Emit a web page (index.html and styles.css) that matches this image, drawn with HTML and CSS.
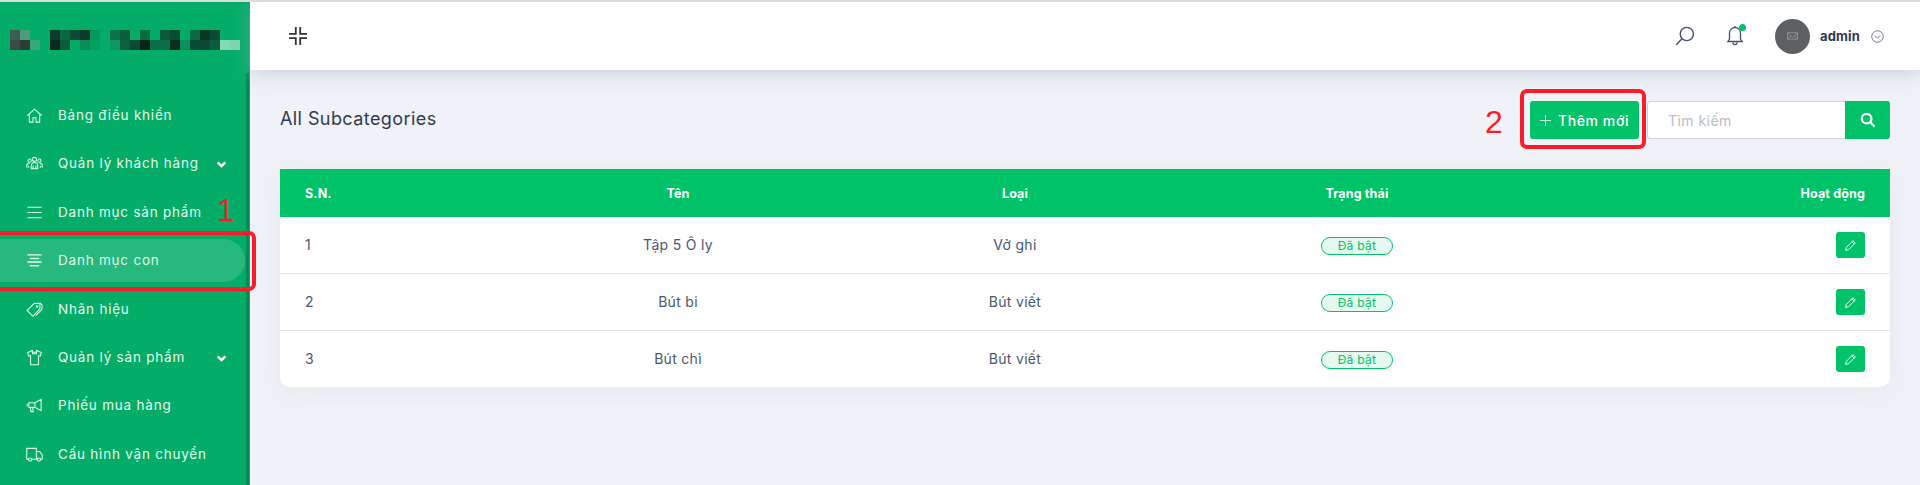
FILE: index.html
```html
<!DOCTYPE html>
<html lang="vi">
<head>
<meta charset="utf-8">
<title>All Subcategories</title>
<link rel="stylesheet" href="styles.css">
</head>
<body>
<div class="app">
  <aside class="sidebar">
    <div class="logo">
      <svg width="240" height="20" viewBox="0 0 240 20" shape-rendering="crispEdges">
        <rect x="10" y="0" width="10" height="10" fill="#3d5d52"/><rect x="20" y="0" width="10" height="10" fill="#4f9a7d"/>
        <rect x="50" y="0" width="10" height="10" fill="#0e3a2a"/><rect x="60" y="0" width="10" height="10" fill="#0c6840"/><rect x="70" y="0" width="10" height="10" fill="#0c4c34"/><rect x="80" y="0" width="10" height="10" fill="#0c3a2a"/><rect x="90" y="0" width="10" height="10" fill="#05995c"/>
        <rect x="110" y="0" width="10" height="10" fill="#0b7248"/><rect x="120" y="0" width="10" height="10" fill="#0a5c3c"/><rect x="140" y="0" width="10" height="10" fill="#0a6a42"/><rect x="160" y="0" width="10" height="10" fill="#0b5a3a"/><rect x="170" y="0" width="10" height="10" fill="#0c4a34"/><rect x="190" y="0" width="10" height="10" fill="#0a6a42"/><rect x="200" y="0" width="10" height="10" fill="#083524"/><rect x="210" y="0" width="10" height="10" fill="#0b4a34"/>
        <rect x="10" y="10" width="10" height="10" fill="#3a4a44"/><rect x="20" y="10" width="10" height="10" fill="#2c3c37"/><rect x="30" y="10" width="10" height="10" fill="#3aa87c"/>
        <rect x="50" y="10" width="10" height="10" fill="#0a2a1e"/><rect x="60" y="10" width="10" height="10" fill="#0f5a3c"/><rect x="80" y="10" width="10" height="10" fill="#0b8c58"/><rect x="90" y="10" width="10" height="10" fill="#06a060"/>
        <rect x="110" y="10" width="10" height="10" fill="#0d9660"/><rect x="120" y="10" width="10" height="10" fill="#0e6040"/><rect x="130" y="10" width="10" height="10" fill="#0b4a34"/><rect x="140" y="10" width="10" height="10" fill="#07231a"/><rect x="150" y="10" width="10" height="10" fill="#0b6e48"/><rect x="160" y="10" width="10" height="10" fill="#0c6e48"/><rect x="170" y="10" width="10" height="10" fill="#0a2e22"/><rect x="180" y="10" width="10" height="10" fill="#0e8e5c"/><rect x="190" y="10" width="10" height="10" fill="#0e4a36"/><rect x="200" y="10" width="10" height="10" fill="#0c4a36"/><rect x="210" y="10" width="10" height="10" fill="#0c5c3e"/><rect x="220" y="10" width="10" height="10" fill="#86d9b4"/><rect x="230" y="10" width="10" height="10" fill="#7ed6ae"/>
      </svg>
    </div>
    <nav class="menu">
      <a class="item"><svg class="ico" viewBox="0 0 18 18"><path d="M1.500 9 9 2.200l7.500 6.800M3.500 7.400V16h3.900v-4.600h3.200V16h3.900V7.400"/></svg><span>Bảng điều khiển</span></a>
      <a class="item"><svg class="ico" viewBox="0 0 18 18"><circle cx="9" cy="4.500" r="2.200"/><circle cx="3.800" cy="6" r="1.700"/><circle cx="14.200" cy="6" r="1.700"/><path d="M5.600 14.500v-3.300C5.600 9.300 7 8 9 8s3.400 1.300 3.400 3.200v3.300zM.8 13.500v-2.500c0-1.300 1-2.200 2.900-2.200M17.200 13.500v-2.500c0-1.300-1-2.200-2.900-2.200M7.500 14.500v-3.500M10.500 14.500v-3.500M2.800 13.500v-2M15.200 13.500v-2"/></svg><span>Quản lý khách hàng</span><svg class="chev" viewBox="0 0 10 8"><path d="M1.500 2 5 5.500 8.500 2"/></svg></a>
      <a class="item"><svg class="ico" viewBox="0 0 18 18"><path d="M1.500 3.500h15M1.500 9h15M1.500 14.500h15"/></svg><span>Danh mục sản phẩm</span></a>
      <a class="item active"><svg class="ico" viewBox="0 0 18 18"><path d="M1.500 3h15M4 6.800h10M1.500 10.500h15M4 14.500h10"/></svg><span>Danh mục con</span></a>
      <a class="item"><svg class="ico" viewBox="0 0 18 18"><path d="M1.200 10 8.800 2.500h5.400l.5.500v5.300L7.400 16.200zM11.700 5.100a.8.800 0 1 0 .01 0M14.800 2 17 4.300v4.600L10.300 15.500"/></svg><span>Nhãn hiệu</span></a>
      <a class="item"><svg class="ico" viewBox="0 0 18 18"><path d="M6.500 1.500 1.800 3.800l1 3.700 2-.5v9.700h8.400V7l2 .5 1-3.700-4.700-2.300c-.3 1.400-1.300 2.100-2.500 2.100s-2.200-.7-2.500-2.100zM6.500 1.500 7 5h4l.5-3.500"/></svg><span>Quản lý sản phẩm</span><svg class="chev" viewBox="0 0 10 8"><path d="M1.500 2 5 5.500 8.500 2"/></svg></a>
      <a class="item"><svg class="ico" viewBox="0 0 18 18"><path d="M3 6h6.500l6.500-3.500v12L9.500 11H3zM1.200 7.200v2.600M4.500 11l.8 4.500h2.400L7 11M9.500 6v5"/></svg><span>Phiếu mua hàng</span></a>
      <a class="item"><svg class="ico" viewBox="0 0 18 18"><path d="M2.600 14H.8V2.500h10.200V14H6.200M11 5.800h3.300L17.200 9.500V14h-1.700M11 14h1"/><circle cx="4.400" cy="14.300" r="1.700"/><circle cx="13.800" cy="14.300" r="1.700"/></svg><span>Cấu hình vận chuyển</span></a>
    </nav>
    <div class="rail"></div>
  </aside>
  <div class="main">
    <header class="topbar">
      <svg class="collapse" viewBox="0 0 18 18"><path d="M0 6.800h6.800V0M11.200 0v6.800H18M18 11.200h-6.800V18M6.800 18v-6.800H0"/></svg>
      <div class="tools">
        <svg class="tool-search" viewBox="0 0 20 20"><circle cx="11.800" cy="8" r="6.600"/><path d="M7 12.800 1.200 18.800"/></svg>
        <span class="bell"><svg viewBox="0 0 20 22"><path d="M10 2.500a5.500 5.500 0 0 0-5.500 5.500v6L2.800 16.500h14.400L15.500 14V8A5.500 5.500 0 0 0 10 2.500zM8 17.500c0 2.700 4 2.700 4 0M10 1v1.500"/></svg><i class="dot"></i></span>
        <span class="avatar"><svg viewBox="0 0 12 8"><path d="M.5.500 4 4 .5 7.500zM11.500.500 8 4l3.500 3.500zM.5.500h11M.5 7.500h11M4 4 6 5.500 8 4"/></svg></span>
        <span class="name">admin</span>
        <svg class="user-chev" viewBox="0 0 12 12"><circle cx="6" cy="6" r="5.300"/><path d="M3.500 5 6 7.500 8.500 5"/></svg>
      </div>
    </header>
    <main class="content">
      <div class="head">
        <h1>All Subcategories</h1>
        <div class="actions">
          <button class="add"><svg class="plus" viewBox="0 0 11 11"><path d="M5.500 0v11M0 5.500h11"/></svg>Thêm mới</button>
          <div class="search">
            <input type="text" placeholder="Tìm kiếm">
            <button class="go"><svg viewBox="0 0 14 14"><circle cx="5.800" cy="5.800" r="4.200"/><path d="M9 9l3.800 3.800"/></svg></button>
          </div>
        </div>
      </div>
      <table class="grid">
        <colgroup><col class="c1"><col class="c2"><col class="c3"><col class="c4"><col class="c5"></colgroup>
        <thead><tr><th>S.N.</th><th>Tên</th><th>Loại</th><th>Trạng thái</th><th>Hoạt động</th></tr></thead>
        <tbody>
          <tr><td>1</td><td>Tập 5 Ô ly</td><td>Vở ghi</td><td><span class="badge">Đã bật</span></td><td><button class="edit"><svg viewBox="0 0 12 12"><path d="M1.500 10.500l.6-2.700L8.300 1.600l2.100 2.100-6.200 6.200zM7.300 2.600l2.100 2.100"/></svg></button></td></tr>
          <tr><td>2</td><td>Bút bi</td><td>Bút viết</td><td><span class="badge">Đã bật</span></td><td><button class="edit"><svg viewBox="0 0 12 12"><path d="M1.500 10.500l.6-2.700L8.300 1.600l2.100 2.100-6.200 6.200zM7.300 2.600l2.100 2.100"/></svg></button></td></tr>
          <tr><td>3</td><td>Bút chì</td><td>Bút viết</td><td><span class="badge">Đã bật</span></td><td><button class="edit"><svg viewBox="0 0 12 12"><path d="M1.500 10.500l.6-2.700L8.300 1.600l2.100 2.100-6.200 6.200zM7.300 2.600l2.100 2.100"/></svg></button></td></tr>
        </tbody>
      </table>
    </main>
  </div>
</div>
<div class="note frame-one"></div>
<span class="note digit digit-one">1</span>
<div class="note frame-two"></div>
<span class="note digit digit-two">2</span>
</body>
</html>
```
FILE: styles.css
```css
* { box-sizing: border-box; }
html, body { margin: 0; height: 100%; overflow: hidden; }
body {
  font-family: Inter, "Noto Sans", "Liberation Sans", sans-serif;
  color: #2f3b52;
  background: #f0f2f7;
  border-top: 2px solid #dcdcdc;
  position: relative;
}
.app { display: flex; height: 483px; }

.sidebar {
  position: relative;
  width: 250px;
  flex: none;
  background: #03ad67;
  padding-top: 28px;
  overflow: hidden;
}
.logo { height: 20px; line-height: 0; }
.rail { position: absolute; right: 1px; top: 71px; bottom: 0; width: 3px; background: #068a54; }
.menu { display: flex; flex-direction: column; margin-top: 44px; }
.item {
  display: flex;
  align-items: center;
  height: 43px;
  margin-bottom: 5.4px;
  margin-right: 5px;
  padding-left: 26px;
  color: #e4f7ee;
  font-size: 13.500px;
  letter-spacing: .78px;
  white-space: nowrap;
  position: relative;
}
.item > span { margin-top: -1px; }
.item.active { background: rgba(255, 255, 255, .14); border-radius: 0 22px 22px 0; }
.ico { width: 17px; height: 17px; margin-right: 15px; flex: none; fill: none; stroke: #e4f7ee; stroke-width: 1.100; }
.active .ico { stroke-width: 1.500; }
.chev { position: absolute; left: 216px; top: 18px; width: 11px; height: 9px; fill: none; stroke: #fff; stroke-width: 2.200; }

.main { flex: 1; display: flex; flex-direction: column; min-width: 0; }
.topbar {
  height: 68px;
  flex: none;
  background: #fff;
  display: flex;
  align-items: center;
  justify-content: space-between;
  padding: 0 36px 0 39px;
  box-shadow: 0 4px 18px rgba(160, 170, 205, .45);
  position: relative;
}
.collapse { width: 18px; height: 18px; fill: none; stroke: #333; stroke-width: 1.800; }
.tools { display: flex; align-items: center; }
.tool-search { width: 20px; height: 20px; fill: none; stroke: #44506c; stroke-width: 1.400; margin-right: 30px; }
.bell { position: relative; width: 20px; height: 22px; margin-right: 30px; }
.bell svg { width: 20px; height: 22px; fill: none; stroke: #44506c; stroke-width: 1.300; display: block; }
.dot { position: absolute; left: 14px; top: -1px; width: 7px; height: 7px; border-radius: 50%; background: #00c268; }
.avatar { width: 35px; height: 35px; border-radius: 50%; background: #5c6063; display: flex; align-items: center; justify-content: center; margin-right: 10px; }
.avatar svg { width: 11px; height: 8px; fill: none; stroke: #a6a9ab; stroke-width: .7; }
.name { font-size: 13px; font-weight: 700; color: #2f3b52; letter-spacing: .15px; margin-right: 11px; }
.user-chev { width: 13px; height: 13px; fill: none; stroke: #55607a; stroke-width: .8; }

.content { flex: 1; padding: 31px 30px 0; }
.head { display: flex; align-items: center; justify-content: space-between; height: 38px; margin-bottom: 30px; }
h1 { font-size: 18px; font-weight: 400; margin: -3px 0 0; color: #2f3b52; letter-spacing: .42px; }
.actions { display: flex; gap: 8px; }
.add {
  width: 109px;
  height: 38px;
  border: 0;
  border-radius: 3px;
  background: #00c268;
  color: #fff;
  font: 500 14px Inter, "Noto Sans", sans-serif;
  letter-spacing: .6px;
  padding: 0;
  white-space: nowrap;
  display: flex;
  align-items: center;
  justify-content: center;
}
.plus { width: 11px; height: 11px; margin-right: 7px; fill: none; stroke: #cdf3df; stroke-width: 1; }
.search { display: flex; width: 243px; height: 38px; }
.search input {
  flex: 1;
  min-width: 0;
  border: 1px solid #ced2d8;
  border-right: 0;
  border-radius: 3px 0 0 3px;
  background: #fff;
  padding: 0 0 0 20px;
  font: 400 14px Inter, "Noto Sans", sans-serif;
  letter-spacing: .45px;
}
.search input::placeholder { color: #b9bcc2; opacity: 1; }
.go { width: 45px; border: 0; border-radius: 0 3px 3px 0; background: #00c268; padding: 0; display: flex; align-items: center; justify-content: center; }
.go svg { width: 16px; height: 16px; fill: none; stroke: #fff; stroke-width: 2; }

.grid {
  width: 1610px;
  table-layout: fixed;
  border-collapse: separate;
  border-spacing: 0;
  background: #fff;
  border-radius: 0 0 10px 10px;
  box-shadow: 0 6px 24px rgba(180, 186, 205, .15);
}
.c1 { width: 228px; } .c2 { width: 340px; } .c3 { width: 334px; } .c4 { width: 350px; } .c5 { width: 358px; }
th {
  height: 48px;
  background: #00c268;
  color: #fff;
  font-size: 12.500px;
  font-weight: 700;
  letter-spacing: .15px;
  text-align: center;
  padding: 0 25px;
}
td {
  height: 57px;
  font-size: 14px;
  color: #4a5670;
  text-align: center;
  padding: 0 25px 2px;
  border-bottom: 1px solid #e4e5e8;
  letter-spacing: .3px;
}
td:nth-child(n+4) { padding-bottom: 0; }
tr:last-child td { border-bottom: 0; height: 56px; }
th:first-child, td:first-child { text-align: left; }
th:last-child, td:last-child { text-align: right; }
.badge {
  display: inline-block;
  width: 72px;
  height: 18px;
  line-height: 16px;
  border: 1px solid #00c268;
  border-radius: 9px;
  background: #e6f9f0;
  color: #00c268;
  font-size: 12px;
  vertical-align: middle;
}
.edit { width: 29px; height: 26px; border: 0; border-radius: 3px; background: #00c268; padding: 0; vertical-align: middle; }
.edit svg { width: 13px; height: 13px; fill: none; stroke: #fff; stroke-width: .9; display: block; margin: auto; }

.note { position: absolute; }
.frame-one { left: -6px; top: 229px; width: 262px; height: 60px; border: 4px solid #fb1c2a; border-radius: 7px; }
.frame-two { left: 1520px; top: 87px; width: 126px; height: 60px; border: 4px solid #fb1c2a; border-radius: 7px; }
.digit { color: #fb1c2a; font-family: "Liberation Sans", sans-serif; line-height: 1; }
.digit-one { left: 217px; top: 193px; font-size: 31px; }
.digit-two { left: 1485px; top: 104px; font-size: 32px; }
```
